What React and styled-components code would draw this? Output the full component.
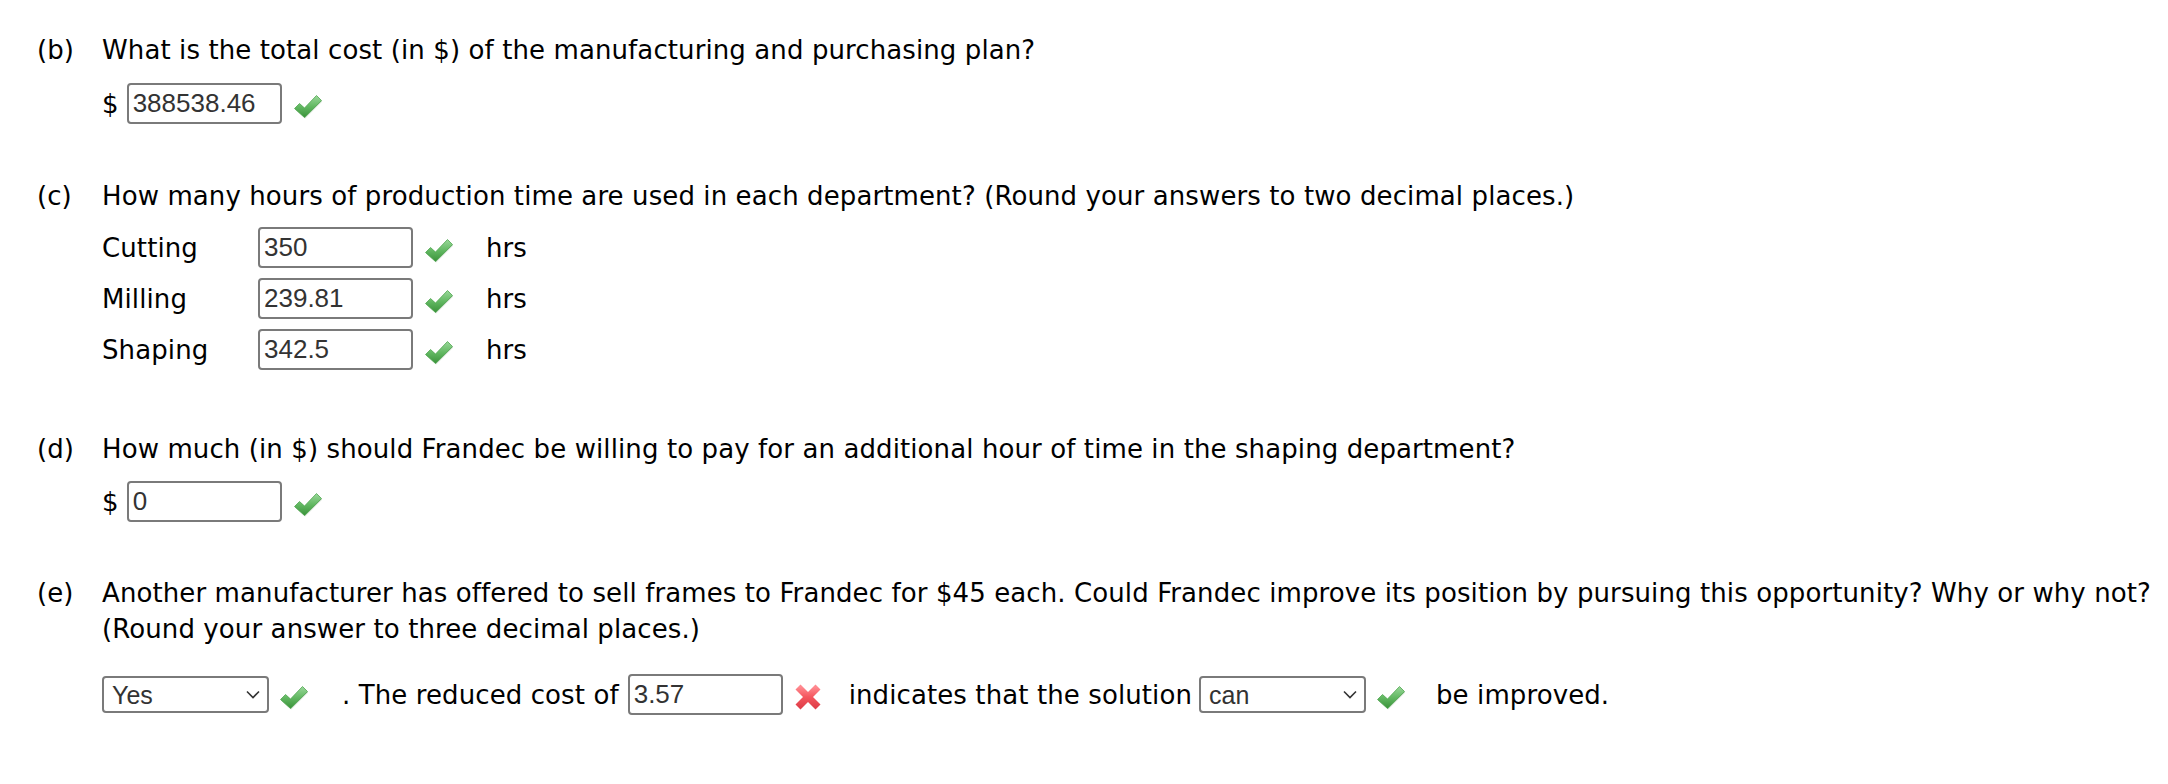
import React, { useId } from "react";
import styled, { createGlobalStyle } from "styled-components";

const GlobalStyle = createGlobalStyle`
  html, body { margin: 0; padding: 0; background: #fff; }
  body { font-family: "DejaVu Sans", Verdana, sans-serif; color: #000; }
`;

const Page = styled.main`
  box-sizing: border-box;
  width: 2168px;
  height: 784px;
  padding: 32px 0 0 37px;
`;

const Question = styled.section`
  display: grid;
  grid-template-columns: 65px 1fr;
  margin-top: ${(p) => p.$top || 0}px;
`;

const Num = styled.div`
  font-size: 26px;
  line-height: 36px;
`;

const Body = styled.div`
  display: flex;
  flex-direction: column;
`;

const Prompt = styled.p`
  margin: 0;
  font-size: 26px;
  letter-spacing: 0.1px;
  line-height: 36px;
  white-space: nowrap;
`;

const AnswerRow = styled.div`
  display: flex;
  align-items: center;
  margin-top: ${(p) => p.$top || 0}px;
`;

const Text = styled.span`
  font-size: 26px;
  letter-spacing: 0.1px;
  line-height: 36px;
  white-space: nowrap;
  margin-left: ${(p) => p.$ml || 0}px;
  margin-right: ${(p) => p.$mr || 0}px;
`;

const Label = styled.span`
  width: 156px;
  font-size: 26px;
  letter-spacing: 0.1px;
  line-height: 36px;
`;

const Field = styled.input`
  box-sizing: border-box;
  width: 155px;
  height: 41px;
  margin: 0;
  border: 2px solid #7a7a7a;
  border-radius: 4px;
  padding: 0 4px;
  font-family: "Liberation Sans", Arial, sans-serif;
  font-size: 26px;
  color: #333;
  background: #fff;
  outline: none;
`;

const Rows = styled.div`
  display: flex;
  flex-direction: column;
  gap: 10px;
  margin-top: 13px;
`;

const SelectWrap = styled.span`
  position: relative;
  display: inline-flex;
  margin-left: ${(p) => p.$ml || 0}px;
`;

const Select = styled.select`
  box-sizing: border-box;
  width: 167px;
  height: 37px;
  margin: 0;
  border: 2px solid #7a7a7a;
  border-radius: 4px;
  padding: 0 0 0 8px;
  font-family: "Liberation Sans", Arial, sans-serif;
  font-size: 25px;
  color: #333;
  background: #fff;
  appearance: none;
  -webkit-appearance: none;
  outline: none;
`;

const Chevron = styled.svg`
  position: absolute;
  right: 9px;
  top: 14px;
  pointer-events: none;
`;

const IconBox = styled.svg`
  flex: none;
  margin-left: ${(p) => p.$ml || 0}px;
  margin-top: 4px;
`;

function Check({ ml = 11 }) {
  const id = useId().replace(/:/g, "");
  return (
    <IconBox $ml={ml} width="30" height="26" viewBox="0 0 30 26">
      <defs>
        <linearGradient id={`g${id}`} x1="0" y1="0" x2="0" y2="1">
          <stop offset="0" stopColor="#9ad89a" />
          <stop offset="0.5" stopColor="#62b862" />
          <stop offset="1" stopColor="#3a923a" />
        </linearGradient>
      </defs>
      <path
        d="M1.5 15.5 L6.5 10.5 L11.5 15 L23.5 2.5 L28.5 7.5 L11.5 24.5 Z"
        fill="#2c6e2c"
        opacity="0.25"
        transform="translate(0.6,1)"
      />
      <path
        d="M1.5 15.5 L6.5 10.5 L11.5 15 L23.5 2.5 L28.5 7.5 L11.5 24.5 Z"
        fill={`url(#g${id})`}
        stroke="#4fa64f"
        strokeWidth="0.8"
        strokeLinejoin="round"
      />
    </IconBox>
  );
}

function Cross({ ml = 11 }) {
  const id = useId().replace(/:/g, "");
  return (
    <IconBox $ml={ml} width="28" height="26" viewBox="0 0 28 26">
      <defs>
        <linearGradient id={`r${id}`} x1="0" y1="0" x2="0" y2="1">
          <stop offset="0" stopColor="#ff8a90" />
          <stop offset="0.5" stopColor="#f4565e" />
          <stop offset="1" stopColor="#e0404a" />
        </linearGradient>
      </defs>
      <g stroke={`url(#r${id})`} strokeWidth="7" strokeLinecap="butt">
        <line x1="4" y1="3" x2="24" y2="23" />
        <line x1="24" y1="3" x2="4" y2="23" />
      </g>
    </IconBox>
  );
}

function Dropdown({ value, ml = 0 }) {
  return (
    <SelectWrap $ml={ml}>
      <Select defaultValue={value}>
        <option value={value}>{value}</option>
      </Select>
      <Chevron width="14" height="9" viewBox="0 0 14 9">
        <path d="M1 1.5 L7 7.5 L13 1.5" fill="none" stroke="#333" strokeWidth="1.6" />
      </Chevron>
    </SelectWrap>
  );
}

const hours = [
  ["Cutting", "350"],
  ["Milling", "239.81"],
  ["Shaping", "342.5"],
];

export default function App() {
  return (
    <>
      <GlobalStyle />
      <Page>
        <Question>
          <Num>(b)</Num>
          <Body>
            <Prompt>What is the total cost (in $) of the manufacturing and purchasing plan?</Prompt>
            <AnswerRow $top={15}>
              <Text $mr={8}>$</Text>
              <Field readOnly value="388538.46" />
              <Check />
            </AnswerRow>
          </Body>
        </Question>

        <Question $top={54}>
          <Num>(c)</Num>
          <Body>
            <Prompt>
              How many hours of production time are used in each department? (Round your answers to two decimal places.)
            </Prompt>
            <Rows>
              {hours.map(([name, v]) => (
                <AnswerRow key={name}>
                  <Label>{name}</Label>
                  <Field readOnly value={v} />
                  <Check />
                  <Text $ml={32}>hrs</Text>
                </AnswerRow>
              ))}
            </Rows>
          </Body>
        </Question>

        <Question $top={61}>
          <Num>(d)</Num>
          <Body>
            <Prompt>
              How much (in $) should Frandec be willing to pay for an additional hour of time in the shaping department?
            </Prompt>
            <AnswerRow $top={14}>
              <Text $mr={8}>$</Text>
              <Field readOnly value="0" />
              <Check />
            </AnswerRow>
          </Body>
        </Question>

        <Question $top={53}>
          <Num>(e)</Num>
          <Body>
            <Prompt>
              Another manufacturer has offered to sell frames to Frandec for $45 each. Could Frandec improve its position by pursuing this opportunity? Why or why not?
              <br />
              (Round your answer to three decimal places.)
            </Prompt>
            <AnswerRow $top={27}>
              <Dropdown value="Yes" />
              <Check ml={10} />
              <Text $ml={33} $mr={9}>. The reduced cost of</Text>
              <Field readOnly value="3.57" />
              <Cross />
              <Text $ml={27} $mr={7}>indicates that the solution</Text>
              <Dropdown value="can" />
              <Check ml={10} />
              <Text $ml={30}>be improved.</Text>
            </AnswerRow>
          </Body>
        </Question>
      </Page>
    </>
  );
}
